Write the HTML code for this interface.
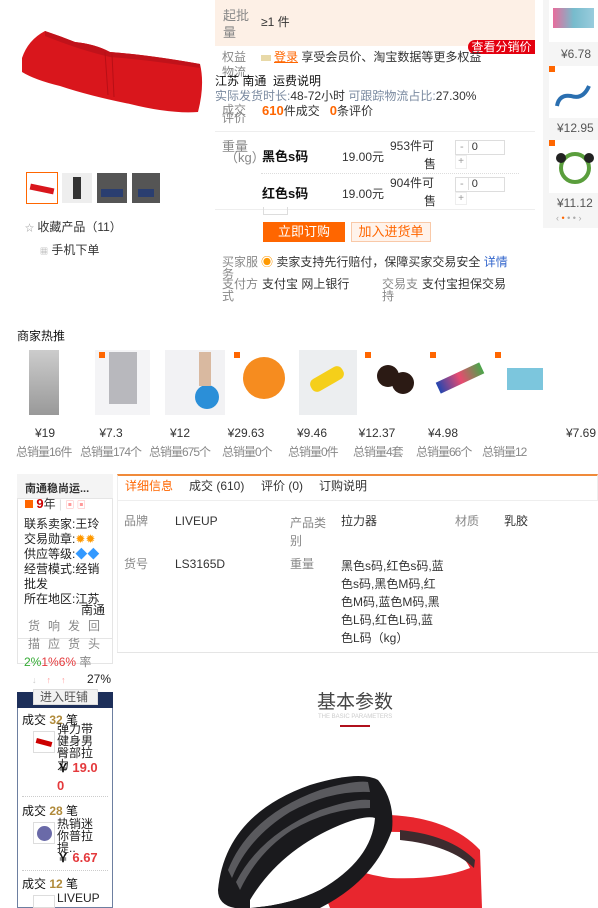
<!DOCTYPE html>
<html><head><meta charset="utf-8"><style>
*{margin:0;padding:0;box-sizing:border-box}
body{width:598px;height:908px;overflow:hidden;background:#fff;font-family:"Liberation Sans","Noto Sans CJK SC",sans-serif;font-size:12px;color:#333;position:relative}
.a{position:absolute;white-space:nowrap;line-height:15px}
.g{color:#888}
.o{color:#f60}
.r{color:#e4393c}
</style></head><body>
<!-- main image -->
<svg class="a" style="left:0;top:0" width="207" height="135">
<path d="M22 58 Q28 40 45 31 Q60 36 75 42 Q95 44 110 52 Q150 55 200 64 Q205 85 198 112 Q170 114 130 104 Q90 96 60 86 Q35 80 22 72Z" fill="#d9161c"/>
<path d="M45 31 Q60 36 75 42 Q95 44 110 52 Q150 55 200 64 L200 68 Q150 60 110 57 Q80 50 45 36Z" fill="#c0121a"/>
<path d="M105 52 L108 95 M112 54 L114 97" stroke="#b80f16" stroke-width="1"/>
</svg>
<!-- thumbs -->
<div class="a" style="left:26px;top:172px;width:32px;height:32px;border:1px solid #f60;background:#fff"><div style="margin:13px 3px;height:6px;background:#d9161c;transform:rotate(12deg)"></div></div>
<div class="a" style="left:62px;top:173px;width:30px;height:30px;background:#eee"><div style="margin:4px 11px;width:8px;height:22px;background:#333"></div></div>
<div class="a" style="left:97px;top:173px;width:30px;height:30px;background:#555"><div style="margin:16px 4px;height:8px;background:#2a3e70"></div></div>
<div class="a" style="left:132px;top:173px;width:28px;height:30px;background:#555"><div style="margin:16px 6px;height:8px;background:#2a3e70"></div></div>
<div class="a" style="left:25px;top:220px;font-size:12px"><span style="color:#999;font-size:9px">☆</span> 收藏产品（11）</div>
<div class="a" style="left:40px;top:243px"><span style="color:#999;font-size:8px">▦</span> 手机下单</div>

<!-- info panel -->
<div class="a" style="left:215px;top:0;width:320px;height:46px;background:#fdf0e6"></div>
<div class="a g" style="left:223px;top:7px;font-size:13px;line-height:17px;white-space:normal;width:30px">起批量</div>
<div class="a" style="left:261px;top:15px">≥1 件</div>
<div class="a" style="left:468px;top:40px;width:67px;height:14px;background:#e4000f;color:#fff;border-radius:7px 0 0 7px;font-size:12px;line-height:14px;text-align:center">查看分销价</div>
<div class="a g" style="left:222px;top:50px">权益</div>
<div class="a g" style="left:222px;top:65px">物流</div>
<div class="a" style="left:261px;top:50px"><span style="display:inline-block;width:10px;height:6px;background:#e8d9a8;margin-right:3px"></span><span class="o" style="text-decoration:underline">登录</span> 享受会员价、淘宝数据等更多权益</div>
<div class="a" style="left:215px;top:74px;color:#111">江苏 南通&nbsp; 运费说明</div>
<div class="a" style="left:215px;top:89px;color:#7a8aa0">实际发货时长:<span style="color:#333">48-72小时</span> 可跟踪物流占比:<span style="color:#333">27.30%</span></div>
<div class="a g" style="left:222px;top:103px">成交</div>
<div class="a g" style="left:222px;top:111px">评价</div>
<div class="a" style="left:262px;top:103px"><b class="o" style="font-size:13px">610</b>件成交&nbsp;&nbsp; <b class="o" style="font-size:13px">0</b>条评价</div>
<div class="a" style="left:215px;top:131px;width:320px;height:1px;background:#eee"></div>
<div class="a g" style="left:222px;top:139px;font-size:13px">重量</div>
<div class="a g" style="left:225px;top:150px;font-size:13px">（kg）</div>
<div class="a" style="left:262px;top:149px;font-size:13px;font-weight:bold;color:#111">黑色s码</div>
<div class="a" style="left:342px;top:150px">19.00元</div>
<div class="a" style="left:390px;top:139px">953件可</div>
<div class="a" style="left:424px;top:157px">售</div>
<div class="a" style="left:455px;top:140px;width:50px;height:15px;border:1px solid #ddd;font-size:11px;line-height:13px"><span style="color:#999;padding:0 4px;border-right:1px solid #ddd">-</span> 0</div>
<div class="a" style="left:455px;top:155px;width:12px;height:14px;border:1px solid #eee;color:#999;font-size:10px;line-height:12px;text-align:center">+</div>
<div class="a" style="left:261px;top:173px;width:258px;border-top:1px dotted #ddd"></div>
<div class="a" style="left:262px;top:186px;font-size:13px;font-weight:bold;color:#111">红色s码</div>
<div class="a" style="left:342px;top:187px">19.00元</div>
<div class="a" style="left:390px;top:176px">904件可</div>
<div class="a" style="left:424px;top:194px">售</div>
<div class="a" style="left:455px;top:177px;width:50px;height:15px;border:1px solid #ddd;font-size:11px;line-height:13px"><span style="color:#999;padding:0 4px;border-right:1px solid #ddd">-</span> 0</div>
<div class="a" style="left:455px;top:192px;width:12px;height:13px;border:1px solid #eee;color:#999;font-size:10px;line-height:12px;text-align:center">+</div>
<div class="a" style="left:215px;top:209px;width:320px;height:1px;background:#eee"></div>
<div class="a" style="left:263px;top:207px;width:25px;height:8px;border:1px solid #ddd;border-top:none"></div>
<div class="a" style="left:263px;top:222px;width:82px;height:20px;background:#f60;color:#fff;font-size:13px;line-height:20px;text-align:center">立即订购</div>
<div class="a o" style="left:351px;top:222px;width:80px;height:20px;background:#fff3eb;border:1px solid #f9c9a8;font-size:13px;line-height:18px;text-align:center">加入进货单</div>
<div class="a g" style="left:222px;top:256px;font-size:12px;line-height:12px;white-space:normal;width:38px">买家服务</div>
<div class="a" style="left:261px;top:255px"><span style="color:#f90">◉</span> 卖家支持先行赔付，保障买家交易安全 <span style="color:#36c">详情</span></div>
<div class="a g" style="left:222px;top:278px;font-size:12px;line-height:12px;white-space:normal;width:38px">支付方式</div>
<div class="a" style="left:262px;top:277px">支付宝 网上银行</div>
<div class="a g" style="left:382px;top:278px;font-size:12px;line-height:12px;white-space:normal;width:38px">交易支持</div>
<div class="a" style="left:422px;top:277px">支付宝担保交易</div>

<!-- right column -->
<div class="a" style="left:543px;top:0;width:55px;height:228px;background:#f5f5f5"></div>
<div class="a" style="left:549px;top:0;width:49px;height:42px;background:#fff"><div style="margin:8px 4px;height:20px;background:linear-gradient(90deg,#e86c9c,#7bc,#9cd)"></div></div>
<div class="a" style="left:561px;top:47px;color:#555">¥6.78</div>
<div class="a" style="left:549px;top:66px;width:49px;height:52px;background:#fff"><svg width="49" height="52"><rect x="0" y="0" width="6" height="6" fill="#f60"/><path d="M8 40 Q10 28 22 30 Q34 34 40 20" stroke="#2a6fb0" stroke-width="4" fill="none"/></svg></div>
<div class="a" style="left:557px;top:121px;color:#555">¥12.95</div>
<div class="a" style="left:549px;top:140px;width:49px;height:53px;background:#fff"><svg width="49" height="53"><rect x="0" y="0" width="6" height="6" fill="#f60"/><ellipse cx="26" cy="28" rx="14" ry="14" stroke="#5a9e3c" stroke-width="4" fill="none"/><circle cx="12" cy="18" r="5" fill="#222"/><circle cx="40" cy="18" r="5" fill="#222"/></svg></div>
<div class="a" style="left:557px;top:196px;color:#555">¥11.12</div>
<div class="a" style="left:556px;top:211px;color:#aaa;font-size:9px">‹ <span style="color:#f60">•</span> • • ›</div>

<!-- hot products -->
<div class="a" style="left:17px;top:329px;color:#111">商家热推</div>
<div class="a" style="left:17px;top:350px;width:581px;height:70px;overflow:hidden">
<div class="a" style="left:12px;top:0;width:30px;height:65px;background:linear-gradient(#ccc,#999)"></div>
<div class="a" style="left:78px;top:0;width:55px;height:65px;background:#f4f4f6"><div style="margin:2px 14px;width:28px;height:52px;background:#b8b8bd"></div></div>
<div class="a" style="left:148px;top:0;width:60px;height:65px;background:#f2f2f4"><div style="position:absolute;left:30px;top:35px;width:24px;height:24px;border-radius:50%;background:#2b8fd8"></div><div style="position:absolute;left:34px;top:2px;width:12px;height:34px;background:#d9b9a0"></div></div>
<div class="a" style="left:217px;top:0;width:60px;height:65px;background:#fff"><div style="margin:7px 9px;width:42px;height:42px;border-radius:50%;background:#f68c1f"></div></div>
<div class="a" style="left:282px;top:0;width:58px;height:65px;background:#eceef0"><div style="margin:22px 10px;width:36px;height:14px;background:#f5cf1a;border-radius:6px;transform:rotate(-30deg)"></div></div>
<div class="a" style="left:348px;top:0;width:60px;height:65px;background:#fff"><div style="position:absolute;left:12px;top:15px;width:22px;height:22px;border-radius:50%;background:#2b1a14"></div><div style="position:absolute;left:27px;top:22px;width:22px;height:22px;border-radius:50%;background:#2b1a14"></div></div>
<div class="a" style="left:413px;top:0;width:60px;height:65px;background:#fff"><div style="margin:22px 6px;height:12px;background:linear-gradient(90deg,#2346b0,#e84a70,#4aa64a);transform:rotate(-25deg)"></div></div>
<div class="a" style="left:478px;top:0;width:60px;height:65px;background:#fff"><div style="margin:18px 12px;height:22px;background:#7cc6dd"></div></div>
<div class="a" style="left:82px;top:2px;width:6px;height:6px;background:#f60"></div>
<div class="a" style="left:217px;top:2px;width:6px;height:6px;background:#f60"></div>
<div class="a" style="left:348px;top:2px;width:6px;height:6px;background:#f60"></div>
<div class="a" style="left:413px;top:2px;width:6px;height:6px;background:#f60"></div>
<div class="a" style="left:478px;top:2px;width:6px;height:6px;background:#f60"></div>
</div>
<div class="a" style="left:0;top:426px;width:598px;height:34px;font-size:12px;overflow:hidden">
<div class="a" style="left:17px;top:0;width:56px;text-align:center">¥19</div>
<div class="a" style="left:81px;top:0;width:60px;text-align:center">¥7.3</div>
<div class="a" style="left:150px;top:0;width:60px;text-align:center">¥12</div>
<div class="a" style="left:216px;top:0;width:60px;text-align:center">¥29.63</div>
<div class="a" style="left:282px;top:0;width:60px;text-align:center">¥9.46</div>
<div class="a" style="left:347px;top:0;width:60px;text-align:center">¥12.37</div>
<div class="a" style="left:413px;top:0;width:60px;text-align:center">¥4.98</div>
<div class="a" style="left:566px;top:0">¥7.69</div>
<div class="a g" style="left:16px;top:19px;letter-spacing:-1px">总销量16件</div>
<div class="a g" style="left:80px;top:19px;letter-spacing:-1px">总销量174个</div>
<div class="a g" style="left:149px;top:19px;letter-spacing:-1px">总销量675个</div>
<div class="a g" style="left:222px;top:19px;letter-spacing:-1px">总销量0个</div>
<div class="a g" style="left:288px;top:19px;letter-spacing:-1px">总销量0件</div>
<div class="a g" style="left:353px;top:19px;letter-spacing:-1px">总销量4套</div>
<div class="a g" style="left:416px;top:19px;letter-spacing:-1px">总销量66个</div>
<div class="a g" style="left:482px;top:19px;letter-spacing:-1px">总销量12</div>
</div>

<!-- shop card -->
<div class="a" style="left:17px;top:474px;width:96px;height:190px;border:1px solid #e5e5e5;border-top:none;background:#fff"></div>
<div class="a" style="left:17px;top:474px;width:96px;height:25px;background:#f4f4f4;border-bottom:1px solid #e5e5e5"></div>
<div class="a" style="left:25px;top:482px;font-weight:bold;font-size:11px;color:#333">南通稳尚运...</div>
<div class="a" style="left:25px;top:496px"><span style="display:inline-block;width:8px;height:8px;background:#f60"></span> <b style="color:#c00;font-size:13px">9</b>年 <span style="color:#ddd">|</span> <span style="color:#f99;font-size:9px">▣ ▣</span></div>
<div class="a" style="left:24px;top:517px;line-height:15px;color:#222">联系卖家:王玲<br>交易勋章:<span style="color:#f90">✹✹</span><br>供应等级:<span style="color:#39f">◆◆</span><br>经营模式:经销<br>批发<br>所在地区:江苏</div>
<div class="a" style="left:81px;top:604px;color:#222;line-height:12px">南通</div>
<div class="a g" style="left:28px;top:619px;letter-spacing:8px">货响发回</div>
<div class="a" style="left:17px;top:638px;width:96px;height:1px;background:#e5e5e5"></div>
<div class="a g" style="left:28px;top:637px;letter-spacing:8px">描应货头</div>
<div class="a" style="left:24px;top:655px"><span style="color:#3a3">2%</span><span class="r">1%6%</span> <span class="g">率</span></div>
<div class="a" style="left:32px;top:673px;color:#ccc;font-size:9px">↓&nbsp;&nbsp;&nbsp;&nbsp;<span style="color:#f99">↑</span>&nbsp;&nbsp;&nbsp;&nbsp;<span style="color:#f99">↑</span></div>
<div class="a" style="left:87px;top:672px;color:#222">27%</div>

<!-- left sidebar -->
<div class="a" style="left:17px;top:692px;width:96px;height:216px;border:1px solid #6d7fa0;border-top:none"></div>
<div class="a" style="left:17px;top:692px;width:96px;height:16px;background:#1d2f5a"></div>
<div class="a" style="left:33px;top:689px;width:65px;height:16px;background:#f2f2f2;border:1px solid #ddd;color:#555;font-size:12px;padding-left:6px">进入旺铺</div>
<div class="a" style="left:22px;top:713px;color:#111">成交 <b style="color:#b08a3a">32</b> 笔</div>
<div class="a" style="left:33px;top:731px;width:22px;height:22px;border:1px solid #ddd"><div style="margin:8px 2px;height:5px;background:#c00;transform:rotate(15deg)"></div></div>
<div class="a" style="left:57px;top:723px;line-height:12px;color:#222;white-space:normal;width:46px">弹力带健身男臀部拉力</div>
<div class="a" style="left:57px;top:760px;font-weight:bold"><span style="color:#111">￥</span> <span class="r" style="font-size:13px">19.0</span></div>
<div class="a r" style="left:57px;top:778px;font-weight:bold;font-size:13px">0</div>
<div class="a" style="left:22px;top:796px;width:86px;border-top:1px dotted #ccc"></div>
<div class="a" style="left:22px;top:804px;color:#111">成交 <b style="color:#b08a3a">28</b> 笔</div>
<div class="a" style="left:33px;top:822px;width:22px;height:22px;border:1px solid #ddd"><div style="margin:3px;width:15px;height:15px;border-radius:50%;background:#6a6aa8"></div></div>
<div class="a" style="left:57px;top:818px;line-height:12px;color:#222;white-space:normal;width:46px">热销迷你普拉提..</div>
<div class="a" style="left:57px;top:850px;font-weight:bold"><span style="color:#111">￥</span> <span class="r" style="font-size:13px">6.67</span></div>
<div class="a" style="left:22px;top:870px;width:86px;border-top:1px dotted #ccc"></div>
<div class="a" style="left:22px;top:877px;color:#111">成交 <b style="color:#b08a3a">12</b> 笔</div>
<div class="a" style="left:33px;top:895px;width:22px;height:13px;border:1px solid #ddd"></div>
<div class="a" style="left:57px;top:892px;line-height:12px;color:#222">LIVEUP</div>

<!-- tabs -->
<div class="a" style="left:117px;top:474px;width:481px;height:27px;border:1px solid #eee;border-top:2px solid #f08a3a"></div>
<div class="a" style="left:125px;top:479px;color:#f60;font-size:12px">详细信息</div>
<div class="a" style="left:189px;top:479px">成交 (610)</div>
<div class="a" style="left:261px;top:479px">评价 (0)</div>
<div class="a" style="left:319px;top:479px">订购说明</div>
<div class="a" style="left:117px;top:500px;width:1px;height:152px;background:#eee"></div>
<div class="a g" style="left:124px;top:514px">品牌</div>
<div class="a" style="left:175px;top:514px">LIVEUP</div>
<div class="a g" style="left:290px;top:514px;line-height:18px;white-space:normal;width:38px">产品类别</div>
<div class="a" style="left:341px;top:514px">拉力器</div>
<div class="a g" style="left:455px;top:514px">材质</div>
<div class="a" style="left:504px;top:514px">乳胶</div>
<div class="a g" style="left:124px;top:557px">货号</div>
<div class="a" style="left:175px;top:557px">LS3165D</div>
<div class="a g" style="left:290px;top:557px">重量</div>
<div class="a" style="left:341px;top:557px;line-height:18px;white-space:normal;width:104px">黑色s码,红色s码,蓝色s码,黑色M码,红色M码,蓝色M码,黑色L码,红色L码,蓝色L码（kg）</div>
<div class="a" style="left:117px;top:652px;width:481px;height:1px;background:#e5e5e5"></div>

<!-- basic params -->
<div class="a" style="left:317px;top:692px;font-size:19px;line-height:22px;color:#444">基本参数</div>
<div class="a" style="left:318px;top:714px;font-size:6px;line-height:7px;color:#ccc">THE BASIC PARAMETERS</div>
<div class="a" style="left:340px;top:725px;width:30px;height:2px;background:#b0101c"></div>
<svg class="a" style="left:0;top:0" width="598" height="908">
<path d="M320 855 Q330 815 390 815 Q450 818 480 850 L482 908 L330 908 Q318 880 320 855Z" fill="#e8262e"/>
<path d="M330 852 Q345 830 400 832 Q455 838 470 868 Q440 880 390 878 Q345 872 330 852Z" fill="#fff"/>
<path d="M400 830 Q450 835 475 860 L474 868 Q450 845 400 840Z" fill="#3d2b2e"/>
<path d="M218 890 Q225 815 310 785 Q360 770 378 780 Q395 800 392 830 Q370 880 310 908 L235 908 Q218 905 218 890Z" fill="#1a1a1d"/>
<path d="M228 870 Q250 815 320 790 Q355 780 368 782 L370 792 Q330 790 290 812 Q248 838 232 878Z" fill="#5a5a5e"/>
<path d="M236 882 Q260 835 320 810 Q355 798 370 800 L370 808 Q330 808 292 830 Q258 852 240 890Z" fill="#5a5a5e"/>
<path d="M250 900 Q280 850 340 825 Q365 815 375 818 Q372 860 320 890 Q290 905 250 908Z" fill="#fff"/>
<path d="M250 908 Q290 905 320 890 Q360 870 380 830 L392 830 Q375 880 320 908Z" fill="#1a1a1d"/>
</svg>
</body></html>
